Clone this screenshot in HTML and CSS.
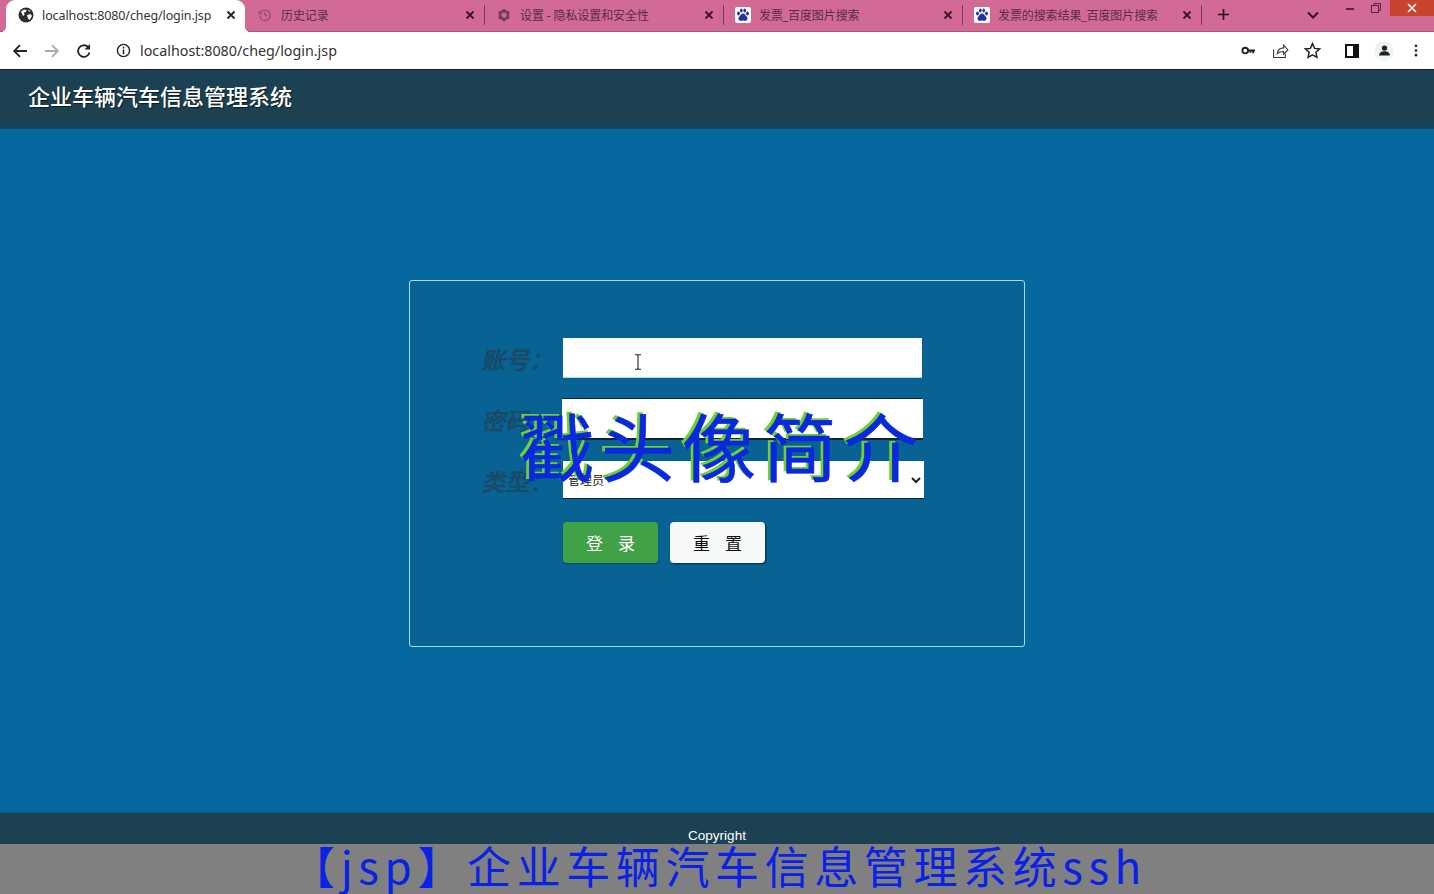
FILE: index.html
```html
<!DOCTYPE html>
<html lang="zh-CN">
<head>
    <meta charset="UTF-8">
    <meta name="viewport" content="width=device-width, initial-scale=1.0">
    <title>企业车辆汽车信息管理系统</title>
    <link rel="stylesheet" href="styles.css">
</head>
<body>
    <div class="tabstrip">
        <div class="tab active">
            <svg class="favicon favicon-lg" viewBox="0 0 16 16"><circle cx="8" cy="8" r="7.500" fill="#2b2b33"/><path d="M3 4.500l3-2 2.500.5-.5 2-2 .5.5 2.500-1.500 1zM9 8l3.500-1 1.500 2-2.500 4-1.500-1.500zM10 2.500l2.500 1.500-1.500.8z" fill="#fff"/></svg>
            <span class="tab-text">localhost:8080/cheg/login.jsp</span>
            <svg class="tab-close" viewBox="0 0 10 10"><path d="M1.500 1.500l7 7M8.500 1.500l-7 7" stroke="#222" stroke-width="1.800"/></svg>
        </div>
        <div class="tab">
            <svg class="favicon" viewBox="0 0 16 16" fill="none" stroke="#8c4a68" stroke-width="1.300"><path d="M3 5a6 6 0 1 1-1 3.500"/><path d="M1.500 3.500v3h3M8 4.500V8l2.500 1.500"/></svg>
            <span class="tab-text">历史记录</span>
            <svg class="tab-close" viewBox="0 0 10 10"><path d="M1.500 1.500l7 7M8.500 1.500l-7 7" stroke="#3d1226" stroke-width="1.800"/></svg>
        </div>
        <div class="tab">
            <svg class="favicon" viewBox="0 0 16 16"><circle cx="8" cy="8" r="4.500" fill="none" stroke="#6e3d57" stroke-width="3"/><path d="M8 1v3M8 12v3M1.900 4.500l2.600 1.500M11.500 10l2.600 1.500M1.900 11.500l2.600-1.500M11.500 6l2.600-1.500" stroke="#6e3d57" stroke-width="2.600"/></svg>
            <span class="tab-text">设置 - 隐私设置和安全性</span>
            <svg class="tab-close" viewBox="0 0 10 10"><path d="M1.500 1.500l7 7M8.500 1.500l-7 7" stroke="#3d1226" stroke-width="1.800"/></svg>
        </div>
        <div class="tab">
            <svg class="favicon favicon-lg" viewBox="0 0 16 16"><rect width="16" height="16" rx="2" fill="#fff"/><g fill="#23329c"><ellipse cx="3.500" cy="6.500" rx="1.400" ry="2"/><ellipse cx="6.300" cy="3.500" rx="1.300" ry="2"/><ellipse cx="9.700" cy="3.500" rx="1.300" ry="2"/><ellipse cx="12.500" cy="6.500" rx="1.400" ry="2"/><path d="M8 6.500c2 0 2.500 2 4 3.500 1.200 1.500.3 4-2 3.800-1 0-1.300-.4-2-.4s-1 .4-2 .4c-2.300.2-3.200-2.300-2-3.800 1.500-1.500 2-3.500 4-3.500z"/></g></svg>
            <span class="tab-text">发票_百度图片搜索</span>
            <svg class="tab-close" viewBox="0 0 10 10"><path d="M1.500 1.500l7 7M8.500 1.500l-7 7" stroke="#3d1226" stroke-width="1.800"/></svg>
        </div>
        <div class="tab">
            <svg class="favicon favicon-lg" viewBox="0 0 16 16"><rect width="16" height="16" rx="2" fill="#fff"/><g fill="#23329c"><ellipse cx="3.500" cy="6.500" rx="1.400" ry="2"/><ellipse cx="6.300" cy="3.500" rx="1.300" ry="2"/><ellipse cx="9.700" cy="3.500" rx="1.300" ry="2"/><ellipse cx="12.500" cy="6.500" rx="1.400" ry="2"/><path d="M8 6.500c2 0 2.500 2 4 3.500 1.200 1.500.3 4-2 3.800-1 0-1.300-.4-2-.4s-1 .4-2 .4c-2.300.2-3.200-2.300-2-3.800 1.500-1.500 2-3.500 4-3.500z"/></g></svg>
            <span class="tab-text">发票的搜索结果_百度图片搜索</span>
            <svg class="tab-close" viewBox="0 0 10 10"><path d="M1.500 1.500l7 7M8.500 1.500l-7 7" stroke="#3d1226" stroke-width="1.800"/></svg>
        </div>
        <svg class="new-tab" viewBox="0 0 14 14"><path d="M7 1v12M1 7h12" stroke="#2e1020" stroke-width="1.800"/></svg>
        <svg class="tab-search" viewBox="0 0 12 8"><path d="M1 1.500l5 5 5-5" fill="none" stroke="#3d1226" stroke-width="2"/></svg>
        <div class="window-controls">
            <svg class="win-btn" viewBox="0 0 10 10"><path d="M1 6h8" stroke="#5a2340" stroke-width="2"/></svg>
            <svg class="win-btn" viewBox="0 0 10 10" fill="none" stroke="#5a2340"><rect x=".5" y="2.500" width="7" height="7"/><path d="M3 2.500V.5h6.500v7h-2"/></svg>
            <div class="win-close">
                <svg class="win-x" viewBox="0 0 10 10"><path d="M1 1l8 8M9 1L1 9" stroke="#fff" stroke-width="1.600"/></svg>
            </div>
        </div>
    </div>

    <div class="toolbar">
        <svg class="tool-icon" viewBox="0 0 16 16"><path d="M15 8H2.500M8 2.200L2.200 8 8 13.800" fill="none" stroke="#222" stroke-width="1.800"/></svg>
        <svg class="tool-icon dim" viewBox="0 0 16 16"><path d="M1 8h12.500M8 2.200L13.800 8 8 13.800" fill="none" stroke="#aaa" stroke-width="1.800"/></svg>
        <svg class="tool-icon" viewBox="0 0 16 16"><path d="M13.500 9.500A5.800 5.800 0 1 1 12 4" fill="none" stroke="#222" stroke-width="1.800"/><path d="M14 1v5.500H8.500z" fill="#222"/></svg>
        <svg class="info-icon" viewBox="0 0 16 16"><circle cx="8" cy="8" r="6.500" fill="none" stroke="#222" stroke-width="1.500"/><path d="M8 7v5M8 4v1.800" stroke="#222" stroke-width="1.600"/></svg>
        <span class="url">localhost:8080/cheg/login.jsp</span>
        <div class="tool-right">
            <svg class="tool-small" viewBox="0 0 16 16"><circle cx="4.500" cy="8" r="3" fill="none" stroke="#222" stroke-width="2"/><path d="M7 7h8v2h-1v2h-2V9h-1v1.500H9V9H7z" fill="#222"/></svg>
            <svg class="tool-small tool-big" viewBox="0 0 16 16" fill="none" stroke="#333"><path d="M1.500 7v7.500h11V11"/><path d="M5 11c.5-3.500 3-5.500 6-5.500V3l4 4.500-4 4V9C8.500 9 6.500 9.500 5 11z"/></svg>
            <svg class="tool-small tool-big" viewBox="0 0 16 16"><path d="M8 1.500l2 4.500 4.800.5-3.600 3.200 1 4.800L8 12.100l-4.200 2.400 1-4.800L1.200 6.500 6 6z" fill="none" stroke="#222" stroke-width="1.400"/></svg>
            <svg class="tool-panel" viewBox="0 0 14 14"><rect x="1" y="1" width="12" height="12" fill="none" stroke="#111" stroke-width="2"/><rect x="8" y="1" width="5" height="12" fill="#111"/></svg>
            <span class="avatar"><svg viewBox="0 0 16 16"><circle cx="8" cy="5" r="3.300" fill="#222"/><path d="M1.500 14c0-3.500 3-5 6.500-5s6.500 1.500 6.500 5z" fill="#222"/></svg></span>
            <svg class="tool-kebab" viewBox="0 0 4 14"><circle cx="2" cy="2" r="1.400" fill="#222"/><circle cx="2" cy="7" r="1.400" fill="#222"/><circle cx="2" cy="12" r="1.400" fill="#222"/></svg>
        </div>
    </div>

    <div class="page-header">企业车辆汽车信息管理系统</div>

    <div class="main">
        <form class="login-box">
            <div class="form-row">
                <label class="form-label">账号：</label>
                <span class="field">
                    <input class="form-input" type="text">
                    <svg class="ibeam" viewBox="0 0 8 16"><path d="M1 .7h2.200L4 1.500 4.800.7H7M1 15.300h2.200L4 14.500l.8.8H7M4 1.500v13" fill="none" stroke="#222" stroke-width="1.100"/></svg>
                </span>
            </div>
            <div class="form-row row-password">
                <label class="form-label">密码：</label>
                <input class="form-input input-password" type="password">
            </div>
            <div class="form-row row-type">
                <label class="form-label">类型：</label>
                <select class="form-select">
                    <option>管理员</option>
                </select>
            </div>
            <div class="button-group">
                <button class="btn btn-green" type="button">登&nbsp;&nbsp;&nbsp;&nbsp;录</button>
                <button class="btn btn-white" type="button">重&nbsp;&nbsp;&nbsp;&nbsp;置</button>
            </div>
            <div class="watermark">戳头像简介</div>
        </form>
    </div>

    <div class="page-footer">Copyright</div>
    <div class="caption">【jsp】企业车辆汽车信息管理系统ssh</div>
</body>
</html>
```

FILE: styles.css
```css
html, body {
    margin: 0;
    padding: 0;
}
body {
    width: 1434px;
    height: 894px;
    overflow: hidden;
    display: flex;
    flex-direction: column;
    font-family: "Noto Sans", "Noto Sans CJK SC", sans-serif;
    background: #05689f;
}

/* browser chrome */
.tabstrip {
    height: 31px;
    flex: none;
    display: flex;
    align-items: stretch;
    padding-left: 6px;
    background: #d26a96;
    border-bottom: 1px solid #a8557a;
}
.tab {
    width: 239px;
    height: 30px;
    box-sizing: border-box;
    display: flex;
    align-items: center;
    padding: 0 9px 0 12px;
    gap: 8px;
    color: #5c2a44;
    font-size: 12px;
    position: relative;
}
.tab + .tab::after {
    content: "";
    position: absolute;
    right: -1px;
    top: 5px;
    height: 20px;
    border-right: 1px solid #7a3a5a;
}
.tab.active {
    background: #fff;
    color: #333;
    border-radius: 9px 9px 0 0;
    height: 32px;
    padding-bottom: 2px;
    font-size: 12.500px;
}
.tab.active::before {
    content: "";
    position: absolute;
    left: -6px;
    bottom: 0;
    width: 6px;
    height: 6px;
    background: radial-gradient(circle at 0 0, transparent 6px, #fff 6.500px);
}
.tab.active::after {
    content: "";
    position: absolute;
    right: -6px;
    bottom: 0;
    width: 6px;
    height: 6px;
    background: radial-gradient(circle at 100% 0, transparent 6px, #fff 6.500px);
}
.favicon {
    width: 14px;
    height: 14px;
    flex: none;
    margin: 0 1px;
}
.favicon-lg {
    width: 16px;
    height: 16px;
    margin: 0;
}
.tab-text {
    flex: 1;
    white-space: nowrap;
    overflow: hidden;
    letter-spacing: -0.1px;
}
.tab-close {
    width: 10px;
    height: 10px;
    flex: none;
}
.new-tab {
    width: 13px;
    height: 13px;
    margin: 8px 0 0 16px;
}
.tab-search {
    width: 12px;
    height: 8px;
    margin: 11px 0 0 77px;
}
.window-controls {
    display: flex;
    margin-left: auto;
    align-items: flex-start;
    gap: 16px;
}
.win-btn {
    width: 10px;
    height: 10px;
    margin-top: 3px;
}
.win-close {
    width: 44px;
    height: 16px;
    margin-left: -7px;
    display: flex;
    align-items: center;
    justify-content: center;
    background: #c8442f;
}
.win-x {
    width: 10px;
    height: 10px;
}

.toolbar {
    height: 37px;
    flex: none;
    display: flex;
    align-items: center;
    padding: 0 16px 0 12px;
    background: #fff;
    border-bottom: 1px solid #14202a;
}
.tool-icon {
    width: 16px;
    height: 16px;
    margin-right: 16px;
}
.info-icon {
    width: 15px;
    height: 15px;
    margin-left: 8px;
    margin-right: 9px;
}
.url {
    font-size: 14.300px;
    color: #333;
}
.tool-right {
    margin-left: auto;
    display: flex;
    align-items: center;
}
.tool-small {
    width: 15px;
    height: 15px;
    margin-right: 17px;
}
.tool-big {
    width: 17px;
    height: 17px;
    margin: 0 16px 0 -1px;
}
.tool-panel {
    width: 14px;
    height: 14px;
    margin: 0 15px 0 8px;
}
.avatar {
    width: 20px;
    height: 20px;
    border-radius: 50%;
    background: #f0f3f5;
    display: flex;
    align-items: center;
    justify-content: center;
    margin-right: 20px;
}
.avatar svg {
    width: 13px;
    height: 13px;
}
.tool-kebab {
    width: 4px;
    height: 13px;
}

/* page */
.page-header {
    height: 59px;
    flex: none;
    box-sizing: border-box;
    padding: 9px 0 0 28px;
    background: #1b4152;
    border-bottom: 2px solid #0e4a70;
    color: #fff;
    font-size: 22px;
    font-weight: 500;
    line-height: 32px;
    text-shadow: 1px 1px 1px rgba(0, 0, 0, 0.6);
    font-family: "Noto Sans CJK SC", sans-serif;
}
.main {
    flex: 1;
    padding-top: 151px;
    background: #05689f;
}
.login-box {
    width: 616px;
    height: 367px;
    box-sizing: border-box;
    margin: 0 auto;
    padding: 57px 0 0 71px;
    background: #086394;
    border: 1px solid #a8dcf0;
    border-radius: 3px;
    position: relative;
}
.form-row {
    display: flex;
    align-items: center;
    height: 40px;
}
.row-password {
    margin-top: 20px;
    height: 42px;
}
.row-type {
    margin-top: 21px;
    height: 38px;
}
.form-label {
    width: 82px;
    flex: none;
    color: #1e4a66;
    font-size: 24px;
    font-style: italic;
    font-family: "Noto Sans CJK SC", sans-serif;
    text-shadow: 0 0 1px #16384e;
    white-space: nowrap;
}
.field {
    position: relative;
    display: block;
    height: 40px;
}
.form-input {
    width: 359px;
    height: 40px;
    box-sizing: border-box;
    border: none;
    border-bottom: 1px solid #a8dcf0;
    padding: 0 6px;
    background: #fff;
    display: block;
}
.input-password {
    width: 361px;
    height: 42px;
    margin-left: -1px;
    border-top: 1px solid #123;
    border-bottom: 2px solid #123;
}
.ibeam {
    position: absolute;
    left: 71px;
    top: 16px;
    width: 8px;
    height: 16px;
}
.form-select {
    width: 361px;
    height: 38px;
    box-sizing: border-box;
    border: none;
    border-bottom: 1px solid #123;
    background: #fff;
    color: #222;
    font-size: 12px;
    font-family: "Noto Sans CJK SC", sans-serif;
    padding-left: 1px;
}
.button-group {
    display: flex;
    gap: 12px;
    margin: 23px 0 0 82px;
}
.btn {
    width: 95px;
    height: 41px;
    border: none;
    border-radius: 4px;
    font-size: 17px;
    font-family: "Noto Sans CJK SC", sans-serif;
    padding: 0;
}
.btn-green {
    background: #41a146;
    color: #fff;
    box-shadow: 0 1px 2px rgba(0, 0, 0, 0.3);
}
.btn-white {
    background: #f7f9f9;
    color: #111;
    box-shadow: 1px 1px 2px rgba(0, 0, 0, 0.6);
}
.watermark {
    position: absolute;
    left: 110px;
    top: 113px;
    font-family: "Noto Sans CJK SC", sans-serif;
    font-size: 74px;
    line-height: 100px;
    letter-spacing: 7px;
    color: #0a28e0;
    -webkit-text-stroke: 0.6px #0a28e0;
    text-shadow: -3px -2px 0 #6fd030;
    white-space: nowrap;
}

.page-footer {
    height: 32px;
    flex: none;
    background: #1b4152;
    border-top: 1px solid #0e5a85;
    box-sizing: border-box;
    color: #fff;
    font-family: "Liberation Sans", sans-serif;
    font-size: 13.500px;
    text-align: center;
    line-height: 15px;
    padding: 15px 0 0 0;
    white-space: nowrap;
    position: relative;
    z-index: 1;
}
.caption {
    height: 50px;
    flex: none;
    background: #808080;
    color: #0a22e6;
    text-align: center;
    font-family: "Noto Sans CJK SC", sans-serif;
    font-size: 44px;
    line-height: 42px;
    letter-spacing: 5.600px;
    white-space: nowrap;
    padding-left: 4px;
    box-sizing: border-box;
    overflow: hidden;
}
```
